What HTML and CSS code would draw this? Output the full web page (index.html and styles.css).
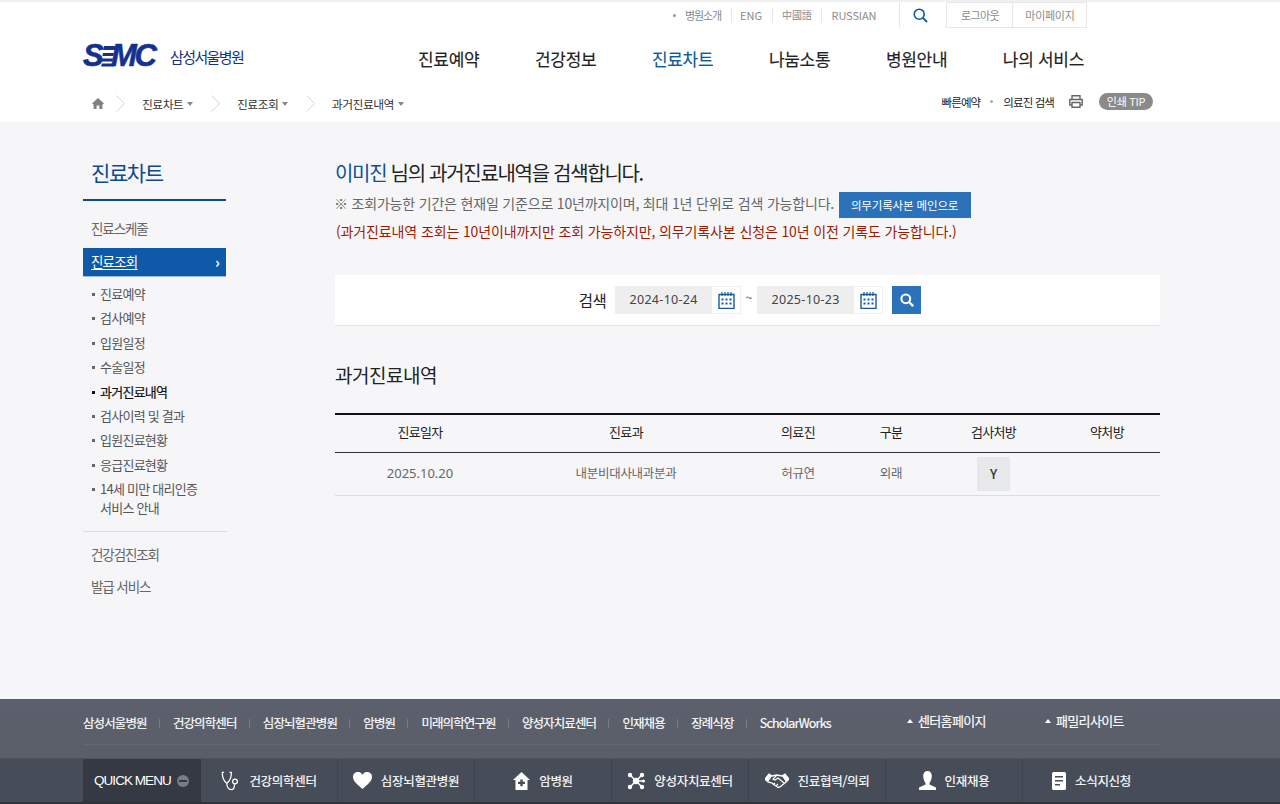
FILE: index.html
```html
<!DOCTYPE html>
<html lang="ko">
<head>
<meta charset="utf-8">
<title>과거진료내역 - 삼성서울병원</title>
<link rel="stylesheet" href="styles.css">
</head>
<body>
<header class="header">
  <div class="wrap util">
    <span class="util-dot"></span>
    <a class="util-link first">병원소개</a>
    <a class="util-link eng">ENG</a>
    <a class="util-link chn">中國語</a>
    <a class="util-link last">RUSSIAN</a>
    <span class="util-search">
      <svg width="15" height="15" viewBox="0 0 15 15"><circle cx="6.200" cy="6.200" r="5" fill="none" stroke="#0d5a9c" stroke-width="1.600"/><path d="M10 10l4 4" stroke="#0d5a9c" stroke-width="1.800"/></svg>
    </span>
    <a class="util-btn login">로그아웃</a>
    <a class="util-btn mypage">마이페이지</a>
  </div>
  <div class="wrap gnb-row">
    <a class="logo">
      <span class="logo-mark">
        <span class="logo-s">S</span>
        <svg class="logo-bars" width="15" height="22" viewBox="0 0 15 22"><path d="M3 1h12l-.8 4H2.200zM2 8h11l-.6 3H1.400zM1 13.500h11l-.6 3H.4zM1 18.500h12l-.6 3H0z" fill="#14318f"/></svg>
        <span class="logo-mc">MC</span>
      </span>
      <span class="logo-name">삼성서울병원</span>
    </a>
    <nav class="gnb">
      <a class="gnb-item">진료예약</a>
      <a class="gnb-item">건강정보</a>
      <a class="gnb-item on">진료차트</a>
      <a class="gnb-item">나눔소통</a>
      <a class="gnb-item">병원안내</a>
      <a class="gnb-item">나의 서비스</a>
    </nav>
  </div>
  <div class="wrap crumb-row">
    <div class="crumbs">
      <svg class="home" width="12" height="11" viewBox="0 0 12 11"><path d="M6 0L0 5.500l1 1 .6-.5V11h3V7.500h2.800V11h3V6l.6.5 1-1z" fill="#7d8186"/></svg>
      <svg class="chev" width="9" height="17" viewBox="0 0 9 17"><path d="M.5.5l8 8-8 8" fill="none" stroke="#d5d5d5"/></svg>
      <a class="crumb">진료차트</a>
      <svg class="chev" width="9" height="17" viewBox="0 0 9 17"><path d="M.5.5l8 8-8 8" fill="none" stroke="#d5d5d5"/></svg>
      <a class="crumb">진료조회</a>
      <svg class="chev" width="9" height="17" viewBox="0 0 9 17"><path d="M.5.5l8 8-8 8" fill="none" stroke="#d5d5d5"/></svg>
      <a class="crumb">과거진료내역</a>
    </div>
    <div class="tools">
      <a class="tool">빠른예약</a>
      <span class="tool-dot"></span>
      <a class="tool">의료진 검색</a>
      <svg class="print" width="14" height="13" viewBox="0 0 14 13"><path d="M3 4V.7h8V4M3 10H.8V4.500h12.400V10H11M3 7.500h8v4.800H3z" fill="none" stroke="#666" stroke-width="1.400"/></svg>
      <a class="tip">인쇄 TIP</a>
    </div>
  </div>
</header>

<div class="wrap content">
  <aside class="side">
    <h2 class="side-title">진료차트</h2>
    <a class="side-link first">진료스케줄</a>
    <a class="side-active"><span class="side-label">진료조회</span><span class="side-arrow">›</span></a>
    <ul class="sub">
      <li>진료예약</li>
      <li>검사예약</li>
      <li>입원일정</li>
      <li>수술일정</li>
      <li class="on">과거진료내역</li>
      <li>검사이력 및 결과</li>
      <li>입원진료현황</li>
      <li>응급진료현황</li>
      <li class="multi">14세 미만 대리인증<br>서비스 안내</li>
    </ul>
    <a class="side-link health">건강검진조회</a>
    <a class="side-link issue">발급 서비스</a>
  </aside>

  <main class="main">
    <h1 class="lead"><em>이미진</em> 님의 과거진료내역을 검색합니다.</h1>
    <div class="note-row">
      <p class="note">※ 조회가능한 기간은 현재일 기준으로 10년까지이며, 최대 1년 단위로 검색 가능합니다.</p>
      <a class="note-btn">의무기록사본 메인으로</a>
    </div>
    <p class="warn">(과거진료내역 조회는 10년이내까지만 조회 가능하지만, 의무기록사본 신청은 10년 이전 기록도 가능합니다.)</p>

    <form class="search">
      <span class="search-label">검색</span>
      <span class="date">2024-10-24</span>
      <span class="cal">
        <svg width="17" height="17" viewBox="0 0 17 17"><path d="M1 2.500h15v14H1z" fill="none" stroke="#175a9f" stroke-width="1.400"/><path d="M4 0v4M7 0v4M10 0v4M13 0v4" stroke="#175a9f" stroke-width="1.200"/><path d="M3.500 6.500h2v2h-2zM7.500 6.500h2v2h-2zM11.500 6.500h2v2h-2zM3.500 10.500h2v2h-2zM7.500 10.500h2v2h-2zM11.500 10.500h2v2h-2z" fill="#175a9f"/></svg>
      </span>
      <span class="tilde">~</span>
      <span class="date">2025-10-23</span>
      <span class="cal">
        <svg width="17" height="17" viewBox="0 0 17 17"><path d="M1 2.500h15v14H1z" fill="none" stroke="#175a9f" stroke-width="1.400"/><path d="M4 0v4M7 0v4M10 0v4M13 0v4" stroke="#175a9f" stroke-width="1.200"/><path d="M3.500 6.500h2v2h-2zM7.500 6.500h2v2h-2zM11.500 6.500h2v2h-2zM3.500 10.500h2v2h-2zM7.500 10.500h2v2h-2zM11.500 10.500h2v2h-2z" fill="#175a9f"/></svg>
      </span>
      <a class="search-btn">
        <svg width="14" height="14" viewBox="0 0 14 14"><circle cx="5.800" cy="5.800" r="4.400" fill="none" stroke="#fff" stroke-width="2"/><path d="M9 9l4.200 4.200" stroke="#fff" stroke-width="2.400"/></svg>
      </a>
    </form>

    <h2 class="section">과거진료내역</h2>
    <table class="records">
      <thead>
        <tr><th class="c1">진료일자</th><th class="c2">진료과</th><th class="c3">의료진</th><th class="c4">구분</th><th class="c5">검사처방</th><th class="c6">약처방</th></tr>
      </thead>
      <tbody>
        <tr><td class="date-cell">2025.10.20</td><td>내분비대사내과분과</td><td>허규연</td><td>외래</td><td class="yes-cell"><a class="yes">Y</a></td><td></td></tr>
      </tbody>
    </table>
  </main>
</div>

<footer class="footer">
  <div class="foot-links">
    <div class="wrap foot-inner">
      <div class="foot-list">
        <a>삼성서울병원</a><a>건강의학센터</a><a>심장뇌혈관병원</a><a>암병원</a><a>미래의학연구원</a><a>양성자치료센터</a><a>인재채용</a><a>장례식장</a><a class="scholar">ScholarWorks</a>
      </div>
      <a class="foot-up center">센터홈페이지</a>
      <a class="foot-up family">패밀리사이트</a>
    </div>
  </div>
  <div class="quick">
    <div class="wrap quick-inner">
      <div class="quick-title">QUICK MENU<span class="minus"></span></div>
      <a class="quick-cell">
        <svg class="steth" width="18" height="20" viewBox="0 0 19 22"><path d="M3 1.500H1c0 5.500 1 9.500 5 12C10 11 11 7 11 1.500H9M6 13.500c0 4 2 7 5 7s3.500-3 3.500-6" fill="none" stroke="#fff" stroke-width="1.400"/><circle cx="15" cy="11.500" r="2.600" fill="none" stroke="#fff" stroke-width="1.400"/></svg>
        건강의학센터
      </a>
      <a class="quick-cell">
        <svg width="19" height="17" viewBox="0 0 19 17"><path d="M9.500 17C3 11.500 0 8.500 0 5a5 5 0 0 1 9.500-2.200A5 5 0 0 1 19 5c0 3.500-3 6.500-9.500 12z" fill="#fff"/></svg>
        심장뇌혈관병원
      </a>
      <a class="quick-cell">
        <svg width="17" height="18" viewBox="0 0 17 18"><path fill-rule="evenodd" d="M8.500 0L17 8h-2.500v10h-12V8H0zM7.300 7.500v2.300H5v2.200h2.300v2.300h2.400V12H12V9.800H9.700V7.500z" fill="#fff"/></svg>
        암병원
      </a>
      <a class="quick-cell">
        <svg width="18" height="18" viewBox="0 0 18 18"><path d="M3 3l6 6-6 6M15 3L9 9l6 6M9 9h7" stroke="#fff" stroke-width="1.500" fill="none"/><circle cx="9" cy="9" r="3.200" fill="#fff"/><circle cx="3" cy="3" r="2.200" fill="#fff"/><circle cx="15" cy="3" r="2.200" fill="#fff"/><circle cx="3" cy="15" r="2.200" fill="#fff"/><circle cx="15" cy="15" r="2.200" fill="#fff"/><circle cx="16.500" cy="9" r="1.500" fill="#fff"/></svg>
        양성자치료센터
      </a>
      <a class="quick-cell">
        <svg width="24" height="15" viewBox="0 0 24 15"><path d="M0 6l4-5 3 2 5-1 5 1 3-2 4 5-3 3-6 5-2 .5-6-4.500L3 9z" fill="none" stroke="#fff" stroke-width="1.300"/><path d="M0 6l4-5 3 2-4 6zM24 6l-4-5-3 2 4 6z" fill="#fff"/><path d="M12 2L8 6l2 1 3-2 6 5M8 12l2-2M11 13l2-2" fill="none" stroke="#fff" stroke-width="1.100"/></svg>
        진료협력/의뢰
      </a>
      <a class="quick-cell">
        <svg width="17" height="19" viewBox="0 0 17 19"><path d="M8.500 0c2.800 0 4.300 2 4.300 5s-1.500 6-2.300 7v1.500l6.500 3V19H0v-2.500l6.500-3V12c-.8-1-2.300-4-2.300-7s1.500-5 4.300-5z" fill="#fff"/></svg>
        인재채용
      </a>
      <a class="quick-cell">
        <svg width="14" height="18" viewBox="0 0 14 18"><path fill-rule="evenodd" d="M1.500 0h11A1.500 1.500 0 0 1 14 1.500v15a1.500 1.500 0 0 1-1.500 1.500h-11A1.500 1.500 0 0 1 0 16.500v-15A1.500 1.500 0 0 1 1.500 0zM3 4v1.600h8V4zm0 4v1.600h8V8zm0 4v1.600h5V12z" fill="#fff"/></svg>
        소식지신청
      </a>
    </div>
  </div>
</footer>
</body>
</html>
```

FILE: styles.css
```css
* { box-sizing: border-box; }
html, body { margin: 0; padding: 0; }
body {
  height: 804px;
  overflow: hidden;
  display: flex;
  flex-direction: column;
  background: #f6f6f9;
  font-family: "Noto Sans CJK KR", "Noto Sans", sans-serif;
  color: #333;
}
a { color: inherit; text-decoration: none; }
h1, h2, p, ul { margin: 0; padding: 0; }
ul { list-style: none; }
.wrap { width: 1114px; margin-left: 83px; }

/* header */
.header {
  height: 122px;
  flex: none;
  background: #fff;
  border-top: 2px solid #f0f0f0;
}
.util {
  height: 26px;
  display: flex;
  align-items: center;
  font-size: 11px;
  color: #8a8a8a;
  padding-left: 590px;
}
.util-dot { width: 3px; height: 3px; border-radius: 50%; background: #999; margin-right: 9px; flex: none; }
.util-link { border-right: 1px solid #e6e6e6; line-height: 14px; letter-spacing: -.2px; }
.util-link.first { padding-right: 10px; letter-spacing: -1.100px; }
.util-link.eng { padding: 0 10px 0 8px; letter-spacing: 0; }
.util-link.chn { padding: 0 9px; font-size: 10px; }
.util-link.last { border-right: 0; padding: 0 23px 0 10px; letter-spacing: -.1px; }
.util-search {
  width: 47px;
  height: 24px;
  border-left: 1px solid #e6e6e6;
  display: flex;
  align-items: center;
  padding-left: 13px;
}
.util-btn {
  height: 26px;
  border: 1px solid #e8e8e8;
  display: flex;
  align-items: center;
  justify-content: center;
  letter-spacing: -.3px;
}
.login { width: 66px; border-right: 0; letter-spacing: -.6px; }
.mypage { width: 75px; }

.gnb-row { height: 61px; display: flex; align-items: center; }
.logo { display: flex; align-items: center; width: 335px; flex: none; margin-top: -5px; }
.logo-mark {
  display: flex;
  align-items: center;
  width: 75px;
  height: 24px;
  font-family: "Liberation Sans", sans-serif;
  font-weight: 700;
  font-style: italic;
  font-size: 31px;
  line-height: 24px;
  color: #14318f;
  -webkit-text-stroke: .6px #14318f;
}
.logo-s { width: 19px; flex: none; }
.logo-bars { flex: none; margin-left: -1px; margin-right: -5px; }
.logo-mc { letter-spacing: -2.200px; }
.logo-name { margin-left: 12px; font-size: 15px; letter-spacing: -1.600px; color: #14318f; }
.gnb { display: flex; gap: 55.600px; }
.gnb-item { font-size: 17px; line-height: 24px; color: #222; font-weight: 400; letter-spacing: -.3px; -webkit-text-stroke: .15px currentColor; }
.gnb-item.on { color: #0d5a9c; }

.crumb-row { height: 33px; display: flex; align-items: center; justify-content: space-between; width: 1070px; padding-bottom: 4px; }
.crumbs { display: flex; align-items: center; padding-left: 9px; font-size: 11.800px; color: #333; letter-spacing: -.5px; }
.home { margin-right: 12px; }
.chev { margin-right: 17px; }
.crumb { margin-right: 17.500px; display: flex; align-items: center; }
.crumb::after {
  content: "";
  width: 0;
  height: 0;
  border: 3.500px solid transparent;
  border-top: 4px solid #888;
  border-bottom: 0;
  margin-left: 4px;
}
.tools { display: flex; align-items: center; font-size: 11.500px; color: #222; letter-spacing: -.9px; margin-top: -4px; }
.tool-dot { width: 3px; height: 3px; border-radius: 50%; background: #aaa; margin: 0 10px; }
.print { margin: 0 16px 0 15px; }
.tip {
  width: 54px;
  height: 17px;
  border-radius: 9px;
  background: #8a8a8a;
  color: #fff;
  font-size: 11px;
  line-height: 17px;
  text-align: center;
  letter-spacing: -.3px;
}

/* content */
.content { flex: 1; display: flex; min-height: 0; }
.side { width: 252px; flex: none; padding-top: 36px; }
.side-title {
  width: 143px;
  height: 43px;
  border-bottom: 2px solid #0f4a8d;
  padding-left: 8px;
  font-size: 21px;
  line-height: 28px;
  font-weight: 400;
  color: #0f4a8d;
  letter-spacing: -1.400px;
}
.side-link { display: block; padding-left: 8px; font-size: 13.500px; line-height: 20px; color: #666; letter-spacing: -1.100px; }
.side-link.first { margin-top: 17px; }
.side-active {
  display: flex;
  justify-content: space-between;
  align-items: center;
  width: 143px;
  height: 28px;
  margin-top: 10px;
  padding: 0 7px 2px 8px;
  background: #0f5aa8;
  box-shadow: 0 1px 0 #9dbce0;
  color: #fff;
  font-size: 13.500px;
  letter-spacing: -.8px;
}
.side-label { text-decoration: underline; text-underline-offset: 2px; }
.side-arrow { font-size: 15px; font-weight: 700; }
.sub {
  width: 144px;
  margin-top: 6px;
  padding: 0 0 14px 9px;
  border-bottom: 1px solid #ddd;
}
.sub li {
  position: relative;
  padding-left: 8px;
  font-size: 13px;
  line-height: 24.400px;
  color: #555;
  letter-spacing: -.75px;
}
.sub li::before {
  content: "";
  position: absolute;
  left: 0;
  top: 11px;
  width: 3px;
  height: 3px;
  background: #666;
}
.sub li.on { color: #111; font-weight: 400; -webkit-text-stroke: .2px #111; }
.sub li.on::before { background: #111; }
.sub li.multi { line-height: 19px; padding-top: 2px; }
.side-link.health { margin-top: 12px; }
.side-link.issue { margin-top: 12px; }

.main { width: 825px; flex: none; padding-top: 36px; }
.lead { font-size: 20px; line-height: 30px; font-weight: 400; color: #222; letter-spacing: -1.300px; }
.lead em { font-style: normal; color: #0f4f96; }
.note-row { display: flex; align-items: center; margin-top: 3px; height: 27px; }
.note { font-size: 14px; color: #666; letter-spacing: -.19px; white-space: nowrap; margin-left: -1px; padding-bottom: 4px; }
.note-btn {
  margin-left: 4.500px;
  width: 132px;
  height: 26px;
  background: #2b72ba;
  color: #fff;
  font-size: 11.500px;
  line-height: 26px;
  text-align: center;
  letter-spacing: -.15px;
}
.warn { margin-top: 1px; font-size: 14px; line-height: 24px; color: #a01a00; letter-spacing: -.13px; white-space: nowrap; padding-left: 1px; }
.search {
  display: flex;
  align-items: center;
  justify-content: center;
  height: 51px;
  margin-top: 32px;
  padding-left: 5px;
  background: #fff;
  border-bottom: 1px solid #e6e6e6;
}
.search-label { font-size: 15.500px; color: #222; margin-right: 9px; letter-spacing: -.6px; }
.date {
  width: 97px;
  height: 28px;
  background: #eeeeee;
  font-family: "Noto Sans", sans-serif;
  font-size: 12.500px;
  line-height: 28px;
  text-align: center;
  color: #444;
  letter-spacing: .3px;
}
.cal {
  width: 29px;
  height: 28px;
  border: 1px solid #f0f0f0;
  border-left: 0;
  display: flex;
  align-items: center;
  justify-content: center;
}
.tilde { width: 16px; text-align: center; font-size: 12px; line-height: 22px; height: 28px; color: #555; }
.search-btn {
  width: 29px;
  height: 28px;
  margin-left: 9px;
  background: #2b72ba;
  display: flex;
  align-items: center;
  justify-content: center;
}
.section { margin-top: 34px; font-size: 19px; line-height: 30px; font-weight: 400; color: #222; letter-spacing: -.5px; }
.records {
  width: 825px;
  margin-top: 23px;
  table-layout: fixed;
  border-collapse: collapse;
  border-top: 2px solid #111;
}
.records th {
  height: 38px;
  border-bottom: 1px solid #333;
  font-size: 13px;
  font-weight: 400;
  color: #222;
  letter-spacing: -.7px;
  padding: 0 0 4px;
}
.records td {
  height: 43px;
  border-bottom: 1px solid #ddd;
  font-size: 12.500px;
  color: #666;
  text-align: center;
  letter-spacing: -.3px;
  padding: 0 0 2px;
}
.records td.date-cell { font-size: 13px; letter-spacing: 0; font-family: "Noto Sans", sans-serif; }
.records td.yes-cell { padding: 0; }
.c1 { width: 170px; }
.c2 { width: 242px; }
.c3 { width: 102px; }
.c4 { width: 84px; }
.c5 { width: 121px; }
.yes {
  display: block;
  width: 33px;
  height: 34px;
  margin: 0 auto;
  background: #e7e8ea;
  color: #333;
  font-size: 13px;
  font-weight: 500;
  line-height: 34px;
}

/* footer */
.footer { flex: none; height: 105px; }
.foot-links { height: 60px; background: linear-gradient(#5b606c, #595e69); border-bottom: 1px solid #4d525d; }
.foot-inner { display: flex; align-items: flex-start; height: 100%; color: #fff; font-size: 12.500px; letter-spacing: -.9px; position: relative; -webkit-text-stroke: .15px #fff; }
.foot-inner::after {
  content: "";
  position: absolute;
  left: 0;
  right: 37px;
  bottom: 13px;
  border-bottom: 1px solid #636873;
}
.foot-list { display: flex; width: 824px; flex: none; padding-top: 15px; line-height: 18px; }
.foot-list a { padding-right: 13px; margin-right: 13.300px; position: relative; white-space: nowrap; }
.foot-list a::after {
  content: "";
  position: absolute;
  right: 0;
  top: 5px;
  height: 9px;
  border-right: 1px solid #767b85;
}
.foot-list a.scholar { padding-right: 0; margin-right: 0; letter-spacing: -.8px; }
.foot-list a.scholar::after { display: none; }
.foot-up { padding-top: 13px; line-height: 18px; display: flex; align-items: center; gap: 5px; height: 31px; font-size: 13px; letter-spacing: -.65px; }
.foot-up::before {
  content: "";
  border: 3px solid transparent;
  border-bottom: 4px solid #fff;
  border-top: 0;
}
.center { width: 138px; }
.quick { height: 45px; background: #474d58; border-bottom: 2px solid #2f333b; }
.quick-inner { display: flex; height: 43px; color: #fff; font-size: 12.500px; letter-spacing: -.3px; -webkit-text-stroke: .15px #fff; }
.quick-title {
  width: 118px;
  flex: none;
  display: flex;
  align-items: center;
  padding-left: 11px;
  background: #343944;
  font-family: "Liberation Sans", sans-serif;
  font-size: 13.500px;
  letter-spacing: -.95px;
  -webkit-text-stroke: 0;
}
.minus {
  position: relative;
  width: 12px;
  height: 12px;
  margin-left: 6px;
  border-radius: 50%;
  background: #777c87;
}
.minus::after {
  content: "";
  position: absolute;
  left: 2px;
  right: 2px;
  top: 5px;
  height: 2px;
  background: #343944;
}
.quick-cell {
  width: 137px;
  flex: none;
  display: flex;
  align-items: center;
  justify-content: center;
  gap: 9px;
  border-right: 1px solid #3e434e;
  white-space: nowrap;
}
.quick-cell:last-child { border-right: 0; }
.steth { margin-right: 1px; }
```
